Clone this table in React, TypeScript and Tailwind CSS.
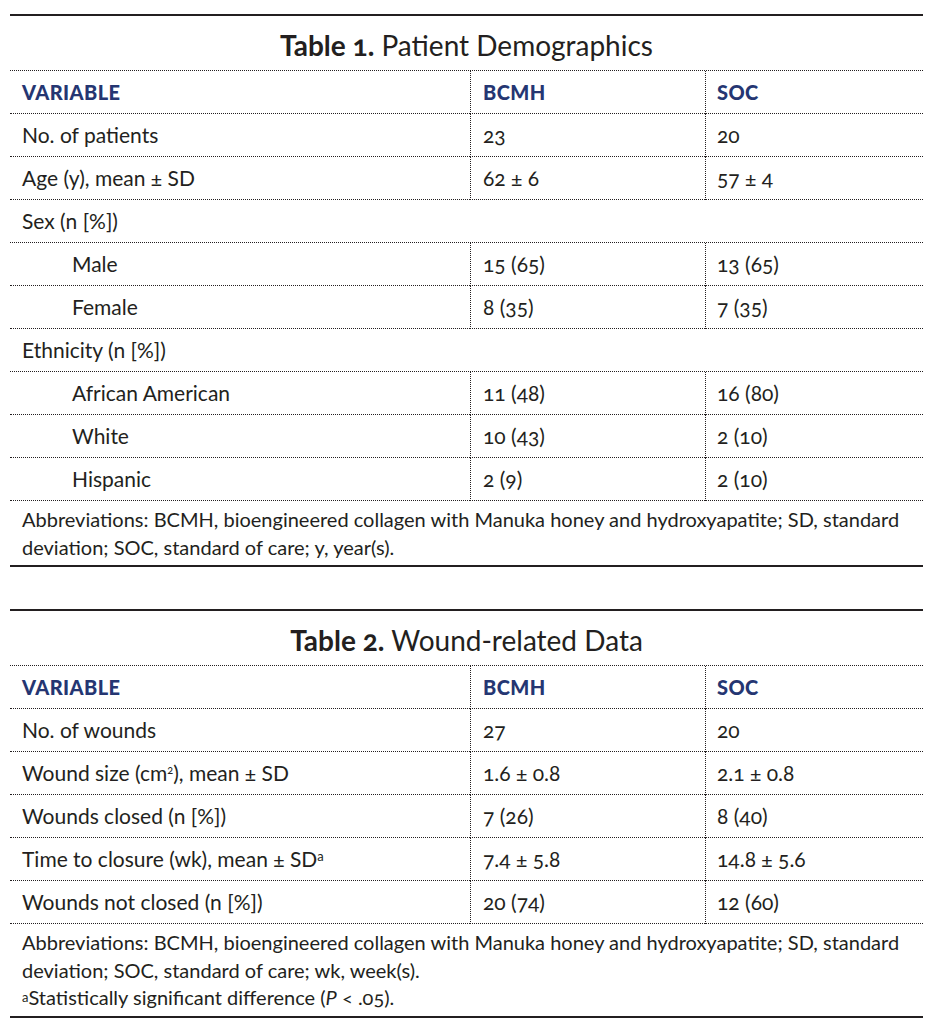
import React from "react";

type Row = {
  label: React.ReactNode;
  a?: string;
  b?: string;
  indent?: boolean;
  span?: boolean;
};

const table1: Row[] = [
  { label: "No. of patients", a: "23", b: "20" },
  { label: "Age (y), mean ± SD", a: "62 ± 6", b: "57 ± 4" },
  { label: "Sex (n [%])", span: true },
  { label: "Male", a: "15 (65)", b: "13 (65)", indent: true },
  { label: "Female", a: "8 (35)", b: "7 (35)", indent: true },
  { label: "Ethnicity (n [%])", span: true },
  { label: "African American", a: "11 (48)", b: "16 (80)", indent: true },
  { label: "White", a: "10 (43)", b: "2 (10)", indent: true },
  { label: "Hispanic", a: "2 (9)", b: "2 (10)", indent: true },
];

const table2: Row[] = [
  { label: "No. of wounds", a: "27", b: "20" },
  {
    label: (
      <>
        Wound size (cm<sup className="text-[11px] relative -top-[3px]">2</sup>), mean ± SD
      </>
    ),
    a: "1.6 ± 0.8",
    b: "2.1 ± 0.8",
  },
  { label: "Wounds closed (n [%])", a: "7 (26)", b: "8 (40)" },
  {
    label: (
      <>
        Time to closure (wk), mean ± SD<sup className="text-[13px] relative -top-[3px]">a</sup>
      </>
    ),
    a: "7.4 ± 5.8",
    b: "14.8 ± 5.6",
  },
  { label: "Wounds not closed (n [%])", a: "20 (74)", b: "12 (60)" },
];

const cell = "h-[43px] flex items-center border-b border-dotted border-[#231f20]";
const head = "font-black text-[#253672] text-[20px] tracking-[0.4px]";

const DataTable = ({
  num,
  title,
  rows,
  notes,
}: {
  num: number;
  title: string;
  rows: Row[];
  notes: React.ReactNode;
}) => (
  <div className="w-[913px] ml-[10px] border-t-2 border-b-2 border-[#231f20]">
    <div className="h-[54px] flex items-center justify-center pt-[4px] text-[28px] text-[#231f20]">
      <span className="font-bold">Table {num}.</span>&nbsp;{title}
    </div>
    <div className="grid grid-cols-[460px_235px_1fr] border-t border-dotted border-[#231f20]">
      <div className={`${cell} pl-3 ${head}`}>VARIABLE</div>
      <div className={`${cell} pl-3 border-l ${head}`}>BCMH</div>
      <div className={`${cell} pl-[11px] border-l ${head}`}>SOC</div>
      {rows.map((r, i) =>
        r.span ? (
          <div key={i} className={`${cell} col-span-3 pl-3`}>
            {r.label}
          </div>
        ) : (
          <React.Fragment key={i}>
            <div className={`${cell} ${r.indent ? "pl-[62px]" : "pl-3"}`}>{r.label}</div>
            <div className={`${cell} pl-3 border-l`}>{r.a}</div>
            <div className={`${cell} pl-[11px] border-l`}>{r.b}</div>
          </React.Fragment>
        )
      )}
    </div>
    <div className="px-3 pt-[5px] pb-[4px] text-[20px] leading-[27.5px]">{notes}</div>
  </div>
);

export default function App() {
  return (
    <div
      className="bg-white w-[936px] h-[1022px] pt-[14px] text-[#231f20] text-[21px] oldstyle-nums"
      style={{ fontFamily: "Lato, 'Open Sans', sans-serif" }}
    >
      <DataTable
        num={1}
        title="Patient Demographics"
        rows={table1}
        notes={
          <>
            Abbreviations: BCMH, bioengineered collagen with Manuka honey and hydroxyapatite; SD, standard
            deviation; SOC, standard of care; y, year(s).
          </>
        }
      />
      <div className="h-[42px]" />
      <DataTable
        num={2}
        title="Wound-related Data"
        rows={table2}
        notes={
          <>
            Abbreviations: BCMH, bioengineered collagen with Manuka honey and hydroxyapatite; SD, standard
            deviation; SOC, standard of care; wk, week(s).
            <br />
            <sup className="text-[13px] relative -top-[3px]">a</sup>Statistically significant difference (
            <i>P</i> &lt; .05).
          </>
        }
      />
    </div>
  );
}
